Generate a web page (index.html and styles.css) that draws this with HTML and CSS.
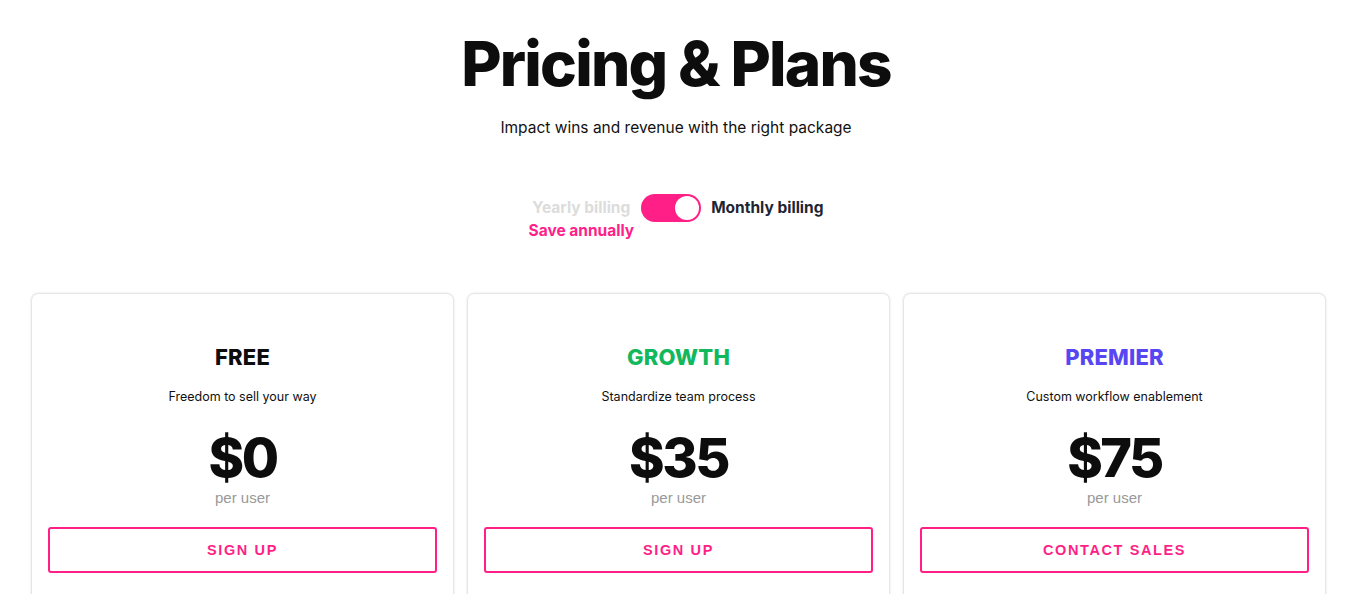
FILE: index.html
```html
<!DOCTYPE html>
<html>
<head>
<meta charset="utf-8">
<link rel="stylesheet" href="styles.css">
</head>
<body>
<header class="hero">
  <h1 class="title">Pricing &amp; Plans</h1>
  <p class="subtitle">Impact wins and revenue with the right package</p>
</header>
<div class="billing">
  <div class="billing-opt yearly">
    <span class="label muted">Yearly billing</span>
    <span class="save">Save annually</span>
  </div>
  <div class="switch"><span class="knob"></span></div>
  <div class="billing-opt monthly">
    <span class="label">Monthly billing</span>
  </div>
</div>
<main class="plans">
  <section class="card">
    <h2 class="plan-name free">FREE</h2>
    <p class="plan-desc">Freedom to sell your way</p>
    <div class="price">$0</div>
    <div class="per">per user</div>
    <a class="btn">SIGN UP</a>
  </section>
  <section class="card">
    <h2 class="plan-name growth">GROWTH</h2>
    <p class="plan-desc">Standardize team process</p>
    <div class="price">$35</div>
    <div class="per">per user</div>
    <a class="btn">SIGN UP</a>
  </section>
  <section class="card">
    <h2 class="plan-name premier">PREMIER</h2>
    <p class="plan-desc">Custom workflow enablement</p>
    <div class="price">$75</div>
    <div class="per">per user</div>
    <a class="btn">CONTACT SALES</a>
  </section>
</main>
</body>
</html>
```
FILE: styles.css
```css
* { box-sizing: border-box; }
html, body { margin: 0; padding: 0; background: #fff; }
body {
  font-family: Inter, "Liberation Sans", sans-serif;
  color: #111;
  overflow: hidden;
}
.hero {
  display: flex;
  flex-direction: column;
  align-items: center;
  padding-top: 26px;
}
.title {
  margin: 0;
  font-size: 62px;
  line-height: 76px;
  font-weight: 800;
  letter-spacing: -1.8px;
  color: #0d0d0d;
}
.subtitle {
  margin: 16px 0 0;
  font-size: 15.5px;
  line-height: 20px;
  color: #111;
}
.billing {
  display: flex;
  justify-content: center;
  align-items: flex-start;
  gap: 7px;
  margin-top: 56px;
}
.billing-opt {
  display: flex;
  flex-direction: column;
  align-items: center;
}
.monthly { margin-left: 3px; }
.label {
  font-size: 15.5px;
  font-weight: 700;
  line-height: 28px;
  color: #1e2532;
}
.label.muted { color: #dcdcdc; }
.save {
  font-size: 15.5px;
  font-weight: 700;
  color: #ff1f8a;
  line-height: 18px;
}
.switch {
  width: 60px;
  height: 28px;
  border-radius: 14px;
  background: #ff1f86;
  display: flex;
  align-items: center;
  justify-content: flex-end;
  padding: 0 2px;
}
.knob {
  width: 24px;
  height: 24px;
  border-radius: 50%;
  background: #fff;
}
.plans {
  display: grid;
  grid-template-columns: repeat(3, 421px);
  gap: 15px;
  padding-left: 32px;
  margin-top: 54px;
}
.card {
  background: #fff;
  border-radius: 6px;
  box-shadow: 0 0 3px rgba(0,0,0,0.28);
  display: flex;
  flex-direction: column;
  align-items: center;
  padding: 49px 16px 40px;
}
.plan-name {
  margin: 0;
  font-size: 22px;
  line-height: 28px;
  font-weight: 800;
  letter-spacing: 0.2px;
}
.free { color: #0d0d0d; }
.growth { color: #12b85c; }
.premier { color: #5846f2; }
.plan-desc {
  margin: 16px 0 0;
  font-size: 12.5px;
  line-height: 20px;
  color: #111;
}
.price {
  margin-top: 21px;
  font-size: 54px;
  line-height: 60px;
  font-weight: 800;
  letter-spacing: -2.5px;
  color: #0d0d0d;
}
.per {
  font-family: "Liberation Sans", Arial, sans-serif;
  font-size: 15px;
  line-height: 18px;
  color: #999;
  margin-top: 1px;
}
.btn {
  margin-top: 20px;
  width: 100%;
  height: 46px;
  border: 2px solid #ff1f86;
  border-radius: 3px;
  display: flex;
  align-items: center;
  justify-content: center;
  font-family: "Liberation Sans", Arial, sans-serif;
  font-weight: 700;
  font-size: 14.5px;
  letter-spacing: 1.6px;
  color: #ff1f86;
}
```
